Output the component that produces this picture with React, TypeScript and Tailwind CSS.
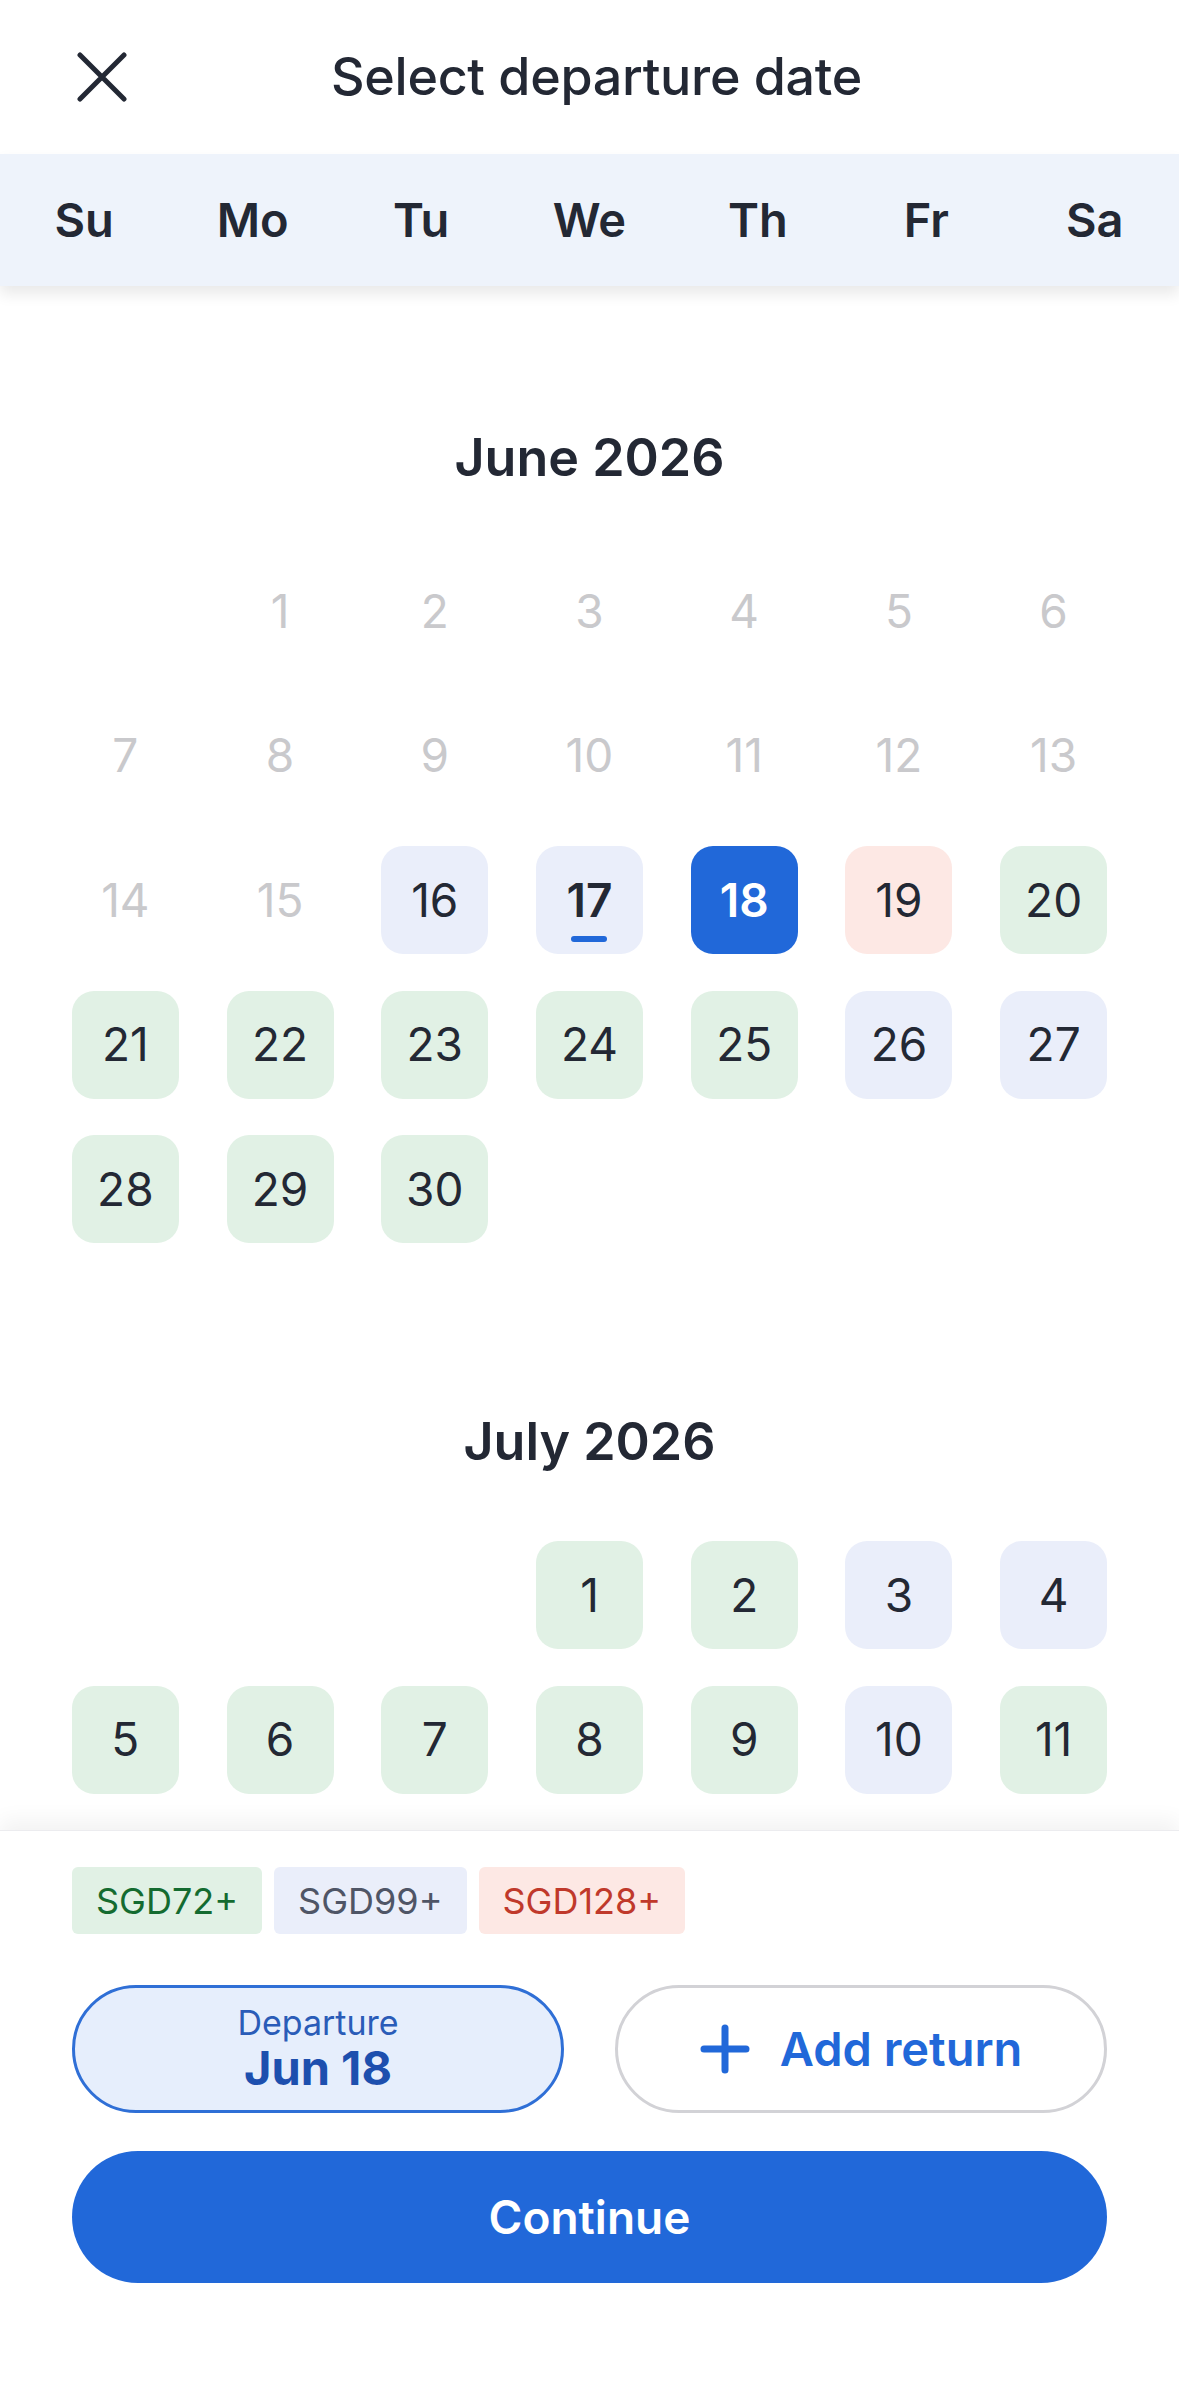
type Tone = 'off' | 'green' | 'blue' | 'red' | 'sel' | 'none';

type Day = { n: number; tone: Tone; today?: boolean } | null;

const toneClass: Record<Tone, string> = {
  off: 'text-[#c9c9cc]',
  none: 'text-[#232834]',
  green: 'bg-[#e1f1e5] text-[#232834]',
  blue: 'bg-[#eaeefa] text-[#232834]',
  red: 'bg-[#fde8e4] text-[#232834]',
  sel: 'bg-[#2168d9] text-white font-semibold',
};

const weekdays = ['Su', 'Mo', 'Tu', 'We', 'Th', 'Fr', 'Sa'];

// June 2026 starts on a Monday
const june: Day[] = [
  null,
  ...Array.from({ length: 15 }, (_, i) => ({ n: i + 1, tone: 'off' as Tone })),
  { n: 16, tone: 'blue' },
  { n: 17, tone: 'blue', today: true },
  { n: 18, tone: 'sel' },
  { n: 19, tone: 'red' },
  { n: 20, tone: 'green' },
  { n: 21, tone: 'green' },
  { n: 22, tone: 'green' },
  { n: 23, tone: 'green' },
  { n: 24, tone: 'green' },
  { n: 25, tone: 'green' },
  { n: 26, tone: 'blue' },
  { n: 27, tone: 'blue' },
  { n: 28, tone: 'green' },
  { n: 29, tone: 'green' },
  { n: 30, tone: 'green' },
];

// July 2026 starts on a Wednesday (only the rows visible above the panel)
const julyTones: Tone[] = ['green', 'green', 'blue', 'blue', 'green', 'green', 'green', 'green', 'green', 'blue', 'green'];
const july: Day[] = [null, null, null, ...julyTones.map((tone, i) => ({ n: i + 1, tone }))];

function DayCell({ day }: { day: Day }) {
  if (!day) return <div className="h-[108px]" />;
  return (
    <div className="flex h-[108px] justify-center">
      <div
        className={`relative flex h-[108px] w-[107px] items-center justify-center rounded-[22px] text-[46px] ${toneClass[day.tone]} ${day.today ? 'font-semibold' : ''}`}
      >
        {day.n}
        {day.today && (
          <span className="absolute bottom-[12px] left-1/2 h-[6px] w-[36px] -translate-x-1/2 rounded-full bg-[#2168d9]" />
        )}
      </div>
    </div>
  );
}

function Month({ title, days, className }: { title: string; days: Day[]; className?: string }) {
  return (
    <section className={className}>
      <h2 className="h-[60px] text-center text-[52px] font-semibold leading-[60px] text-[#232834]">{title}</h2>
      <div className="mt-[69px] grid grid-cols-7 gap-y-[36.5px] px-12">
        {days.map((d, i) => (
          <DayCell key={i} day={d} />
        ))}
      </div>
    </section>
  );
}

export default function App() {
  return (
    <div className="flex h-[2396px] w-full flex-col overflow-hidden bg-white font-['Inter',sans-serif] text-[#232834]">
      {/* header */}
      <header className="grid h-[154px] grid-cols-[150px_1fr_136px] items-center">
        <button className="ml-[77px] flex h-[50px] w-[50px] items-center justify-center">
          <svg width="50" height="50" viewBox="0 0 50 50" fill="none" stroke="#232834" strokeWidth="5" strokeLinecap="round">
            <path d="M3 3 L47 47 M47 3 L3 47" />
          </svg>
        </button>
        <h1 className="text-center text-[52px] font-medium tracking-[-0.3px]">Select departure date</h1>
        <div />
      </header>

      {/* weekday bar */}
      <div className="relative z-10 grid h-[132px] grid-cols-7 items-center bg-[#eef3fb] shadow-[0_8px_14px_rgba(0,0,0,0.09)]">
        {weekdays.map((w) => (
          <div key={w} className="text-center text-[47px] font-semibold">
            {w}
          </div>
        ))}
      </div>

      {/* calendar */}
      <main className="flex-1 overflow-hidden pt-[142px]">
        <Month title="June 2026" days={june} />
        <Month title="July 2026" days={july} className="mt-[169px]" />
      </main>

      {/* bottom panel */}
      <footer className="relative z-10 h-[566px] shrink-0 border-t border-[#ececef] bg-white px-[72px] pt-[36px] shadow-[0_-10px_20px_rgba(0,0,0,0.05)]">
        <div className="flex gap-[12px]">
          <span className="flex h-[67px] items-center rounded-[6px] bg-[#e1f1e5] px-[24px] text-[36px] text-[#146b30]">SGD72+</span>
          <span className="flex h-[67px] items-center rounded-[6px] bg-[#eaeefa] px-[24px] text-[36px] text-[#4f5566]">SGD99+</span>
          <span className="flex h-[67px] items-center rounded-[6px] bg-[#fde8e4] px-[24px] text-[36px] text-[#c0392b]">SGD128+</span>
        </div>

        <div className="mt-[51px] grid grid-cols-2 gap-[51px]">
          <button className="flex h-[128px] flex-col items-center justify-center rounded-full border-[3px] border-[#2f6fd6] bg-[#e6eefc]">
            <span className="text-[34px] leading-[38px] text-[#2a5cb8]">Departure</span>
            <span className="text-[47px] font-bold leading-[52px] text-[#1d4fae]">Jun 18</span>
          </button>
          <button className="flex h-[128px] items-center justify-center gap-[30px] rounded-full border-[3px] border-[#d2d2d6] bg-white">
            <svg width="50" height="50" viewBox="0 0 50 50" fill="none" stroke="#2168d9" strokeWidth="7" strokeLinecap="round">
              <path d="M25 4 V46 M4 25 H46" />
            </svg>
            <span className="text-[47px] font-semibold text-[#2168d9]">Add return</span>
          </button>
        </div>

        <button className="mt-[38px] flex h-[132px] w-full items-center justify-center rounded-full bg-[#2168d9] text-[46px] font-semibold text-white">
          Continue
        </button>
      </footer>
    </div>
  );
}
